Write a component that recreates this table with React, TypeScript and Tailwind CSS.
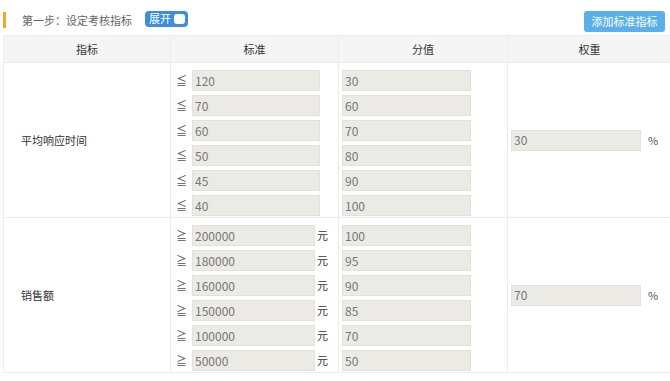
const rows = [
  {
    name: "平均响应时间",
    sign: "≦",
    unit: "",
    items: [
      ["120", "30"],
      ["70", "60"],
      ["60", "70"],
      ["50", "80"],
      ["45", "90"],
      ["40", "100"],
    ],
    weight: "30",
  },
  {
    name: "销售额",
    sign: "≧",
    unit: "元",
    items: [
      ["200000", "100"],
      ["180000", "95"],
      ["160000", "90"],
      ["150000", "85"],
      ["100000", "70"],
      ["50000", "50"],
    ],
    weight: "70",
  },
];

function Field({ value, width }: { value: string; width: string }) {
  return (
    <div
      className={`flex h-[21px] items-center border border-[#e2e1da] bg-[#ebeae4] pl-[2px] text-[12px] leading-none text-[#777] ${width}`}
    >
      {value}
    </div>
  );
}

export default function App() {
  return (
    <div
      className="h-[381px] w-[670px] bg-white"
      style={{ fontFamily: '"Microsoft YaHei", "Noto Sans CJK SC", sans-serif' }}
    >
      <div className="flex h-[35px] items-start justify-between pl-[3px] pr-[5px] pt-[9px]">
        <div className="flex items-center">
          <div className="mt-[3px] h-[16px] w-[3px] bg-[#f5a623]" />
          <span className="ml-[16px] mt-[3px] text-[11px] text-[#666]">第一步：设定考核指标</span>
          <div className="ml-[13px] flex h-[16px] w-[43px] items-center justify-between rounded-[4px] bg-[#3b8fdc] pl-[4px] pr-[3px]">
            <span className="text-[11px] leading-none text-white">展开</span>
            <span className="h-[10px] w-[11px] rounded-[3px] bg-white" />
          </div>
        </div>
        <button className="mt-[2px] h-[21px] w-[81px] rounded-[3px] bg-[#5ab0e8] text-[11px] text-white">
          添加标准指标
        </button>
      </div>
      <div className="ml-[3px] border-l border-[#ececec]">
        <div className="grid h-[28px] grid-cols-[167px_168px_169px_163px] border-y border-[#ececec] bg-[#f5f5f5] text-[11px] text-[#333]">
          <div className="flex items-center justify-center border-r border-[#ececec]">指标</div>
          <div className="flex items-center justify-center border-r border-[#ececec]">标准</div>
          <div className="flex items-center justify-center border-r border-[#ececec]">分值</div>
          <div className="flex items-center justify-center">权重</div>
        </div>
        {rows.map((r) => (
          <div
            key={r.name}
            className="grid grid-cols-[167px_168px_169px_163px] border-b border-[#ececec]"
          >
            <div className="flex items-center border-r border-[#ececec] pl-[17px] text-[11px] text-[#333]">
              {r.name}
            </div>
            <div className="flex flex-col gap-[4px] border-r border-[#ececec] pb-[1px] pt-[7px] pl-[5px]">
              {r.items.map(([a]) => (
                <div key={a} className="flex h-[21px] items-center">
                  <span className="w-[16px] text-[11px] leading-none text-[#555]">{r.sign}</span>
                  <Field value={a} width={r.unit ? "w-[123px]" : "w-[128px]"} />
                  <span className="ml-[2px] text-[11px] leading-none text-[#333]">{r.unit}</span>
                </div>
              ))}
            </div>
            <div className="flex flex-col gap-[4px] border-r border-[#ececec] pb-[1px] pt-[7px] pl-[3px]">
              {r.items.map(([a, b]) => (
                <Field key={a} value={b} width="w-[129px]" />
              ))}
            </div>
            <div className="flex items-center pl-[3px]">
              <Field value={r.weight} width="w-[130px]" />
              <span className="ml-[7px] text-[11px] text-[#555]">%</span>
            </div>
          </div>
        ))}
      </div>
    </div>
  );
}
